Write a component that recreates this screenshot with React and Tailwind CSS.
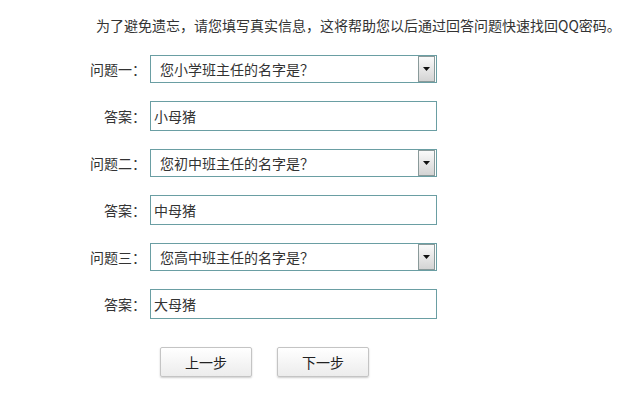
import React from "react";

const font = { fontFamily: '"Noto Sans CJK SC", "Liberation Sans", sans-serif' };

function Select({ value }) {
  return (
    <div className="flex h-[28px] w-[287px] items-center border border-[#6a9ea3] bg-white pl-[9px] pr-[1px]">
      <span className="flex-1 text-[14px] leading-[20px] text-[#333]">{value}</span>
      <div className="flex h-[26px] w-[17px] items-center justify-center border border-[#8a9a9a] bg-gradient-to-b from-[#fafafa] to-[#d4d4d4]">
        <svg width="7" height="4" viewBox="0 0 7 4">
          <path d="M0 0h7L3.5 4z" fill="#111" />
        </svg>
      </div>
    </div>
  );
}

function Row({ label, children }) {
  return (
    <div className="flex items-center">
      <label className="w-[146px] text-right text-[14px] leading-[20px] text-[#333]">{label}</label>
      <div className="ml-[4px]">{children}</div>
    </div>
  );
}

export default function App() {
  const items = [
    { label: "问题一：", q: "您小学班主任的名字是？", a: "小母猪" },
    { label: "问题二：", q: "您初中班主任的名字是？", a: "中母猪" },
    { label: "问题三：", q: "您高中班主任的名字是？", a: "大母猪" },
  ];

  return (
    <div className="min-h-screen w-[629px] bg-white pt-[15px]" style={font}>
      <p className="pl-[96px] text-[14px] leading-[20px] text-[#333]">
        为了避免遗忘，请您填写真实信息，这将帮助您以后通过回答问题快速找回QQ密码。
      </p>

      <div className="mt-[20px] flex flex-col gap-[18px]">
        {items.map((it) => (
          <React.Fragment key={it.label}>
            <Row label={it.label}>
              <Select value={it.q} />
            </Row>
            <Row label="答案：">
              <input
                defaultValue={it.a}
                className="h-[30px] w-[287px] border border-[#6a9ea3] bg-white px-[3px] text-[14px] text-[#333] outline-none"
                style={font}
              />
            </Row>
          </React.Fragment>
        ))}
      </div>

      <div className="mt-[28px] flex gap-[25px] pl-[160px]">
        <button className="h-[30px] w-[92px] rounded-[2px] border border-[#c4c4c4] bg-gradient-to-b from-white to-[#ececec] text-[14px] text-[#222] shadow-[0_1px_2px_rgba(0,0,0,0.2)]">
          上一步
        </button>
        <button className="h-[30px] w-[92px] rounded-[2px] border border-[#c4c4c4] bg-gradient-to-b from-white to-[#ececec] text-[14px] text-[#222] shadow-[0_1px_2px_rgba(0,0,0,0.2)]">
          下一步
        </button>
      </div>
    </div>
  );
}
